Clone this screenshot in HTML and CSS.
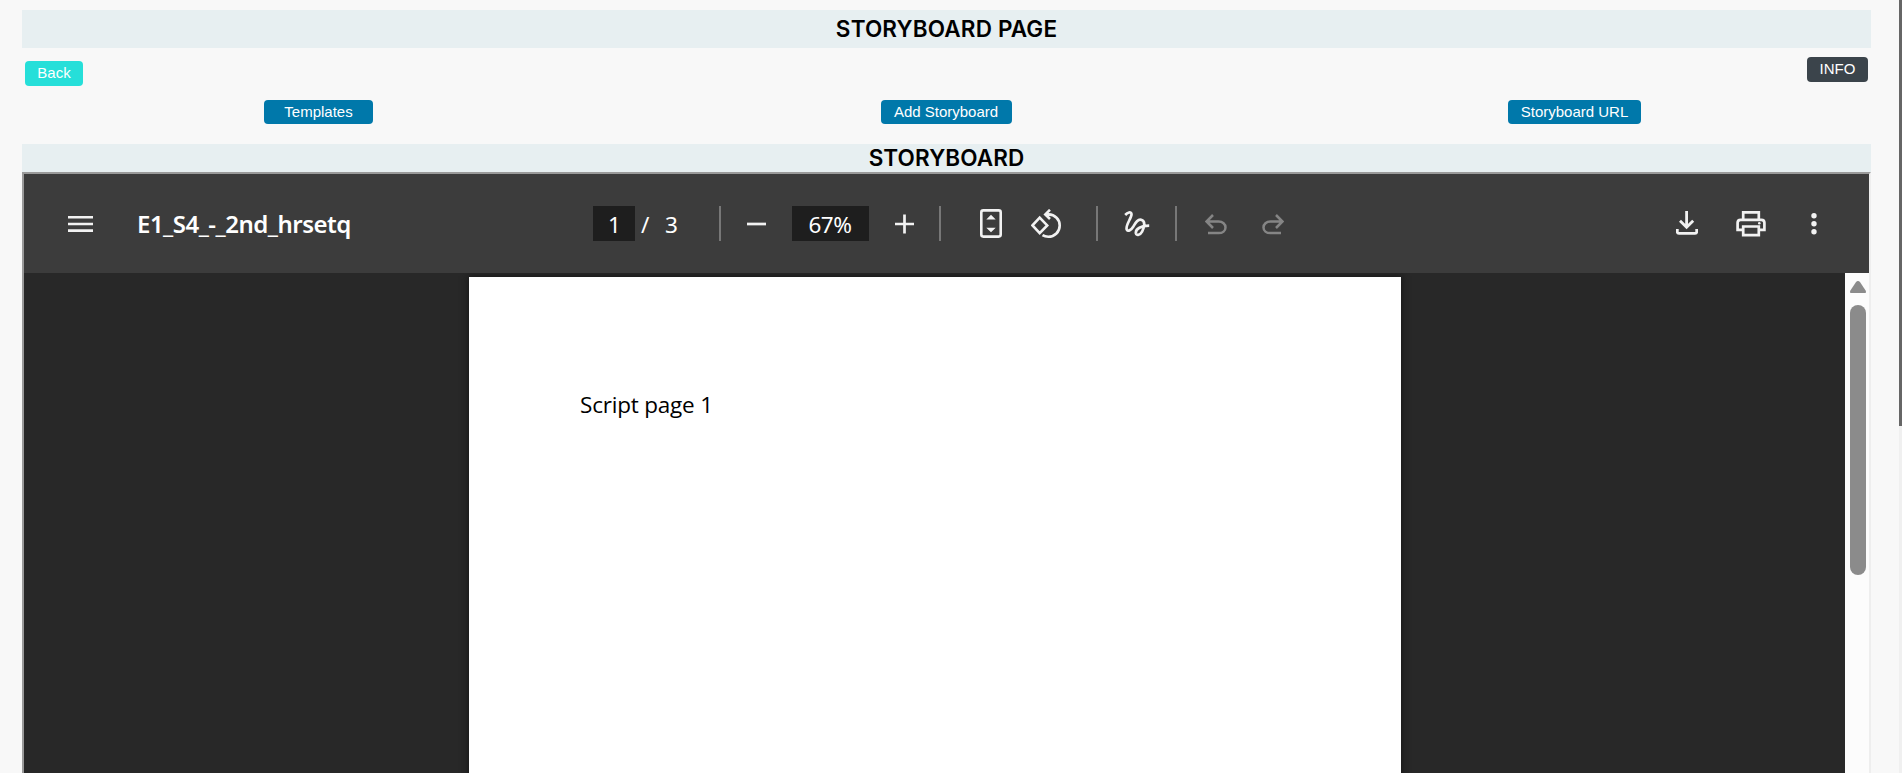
FILE: index.html
```html
<!DOCTYPE html>
<html lang="en">
<head>
<meta charset="utf-8">
<title>Storyboard Page</title>
<link rel="stylesheet" href="styles.css">
</head>
<body>
<main class="page">
  <h1 class="heading heading-main"><span class="main-text">STORYBOARD PAGE</span></h1>
  <div class="nav">
    <button class="btn back">Back</button>
    <button class="btn info">INFO</button>
  </div>
  <div class="actions">
    <div><button class="btn templates">Templates</button></div>
    <div><button class="btn add">Add Storyboard</button></div>
    <div><button class="btn url">Storyboard URL</button></div>
  </div>
  <h2 class="heading heading-sub"><span class="sub-text">STORYBOARD</span></h2>
  <section class="viewer">
    <header class="toolbar">
      <div class="tools-left">
        <svg class="icon" width="25" height="18" viewBox="0 0 25 18"><path d="M0 2.2h25M0 9h25M0 15.6h25" stroke-width="2.6"/></svg>
        <span class="doc-title">E1_S4_-_2nd_hrsetq</span>
      </div>
      <div class="tools-center">
        <span class="field page-no">1</span>
        <span class="slash">/</span>
        <span class="total">3</span>
        <i class="sep sep-a"></i>
        <svg class="icon minus" width="19" height="20" viewBox="0 0 19 20"><path d="M0 10h19" stroke-width="2.7"/></svg>
        <span class="field zoom">67%</span>
        <svg class="icon plus" width="19" height="20" viewBox="0 0 19 20"><path d="M0 10h19M9.5 .5v19" stroke-width="2.7"/></svg>
        <i class="sep sep-b"></i>
        <svg class="icon fit" width="22" height="29" viewBox="0 0 22 29"><rect x="1.3" y="1.4" width="19.4" height="26.2" rx="2" stroke-width="2.6"/><path class="solid" d="M6.3 10.5 11 5.8l4.7 4.7zM6.3 18.8H15.7L11 23.2z"/></svg>
        <svg class="icon rotate" width="31" height="30" viewBox="0 0 31 30"><path d="M8.7 8.7 16.2 16.4 8.7 24.1 1.5 16.4z" stroke-width="2.6"/><path d="M14.3 5.4h3.2c6.5.3 11.2 4.9 11.2 11 0 6.4-5 11.4-11.4 11.4-2.2 0-4.1-.5-5.8-1.6M19 .8l-4.7 4.6L19 10" stroke-width="2.6"/></svg>
        <i class="sep sep-c"></i>
        <svg class="icon draw" width="26" height="26" viewBox="0 0 26 26"><path d="M1.2 4C3.4 1.7 7.2.1 7.5 3.1 7.8 6.8 1 14.6 2.8 18.6c1.2 2.5 4.4.3 6.4-2.9 2.3-3.7 4.2-7.6 8-6.9 4.6 1 3.2 7.7.9 11.8-1.8 3.2-5.6 4.6-6.2 1.6-.7-4.8 5.6-7.4 13.3-7.5" stroke-width="2.7"/></svg>
        <i class="sep sep-d"></i>
        <svg class="icon undo" width="22" height="22" viewBox="0 0 22 22"><path d="M8 1 1.6 7.5 8 14M1.6 7.5h12c4 0 6.9 2.6 6.9 5.9s-2.9 5.7-6.9 5.7H3" stroke-width="2.5"/></svg>
        <svg class="icon redo" width="22" height="22" viewBox="0 0 22 22"><path d="M14 1l6.4 6.5L14 14M20.4 7.5h-12c-4 0-6.9 2.6-6.9 5.9s2.9 5.7 6.9 5.7H19" stroke-width="2.5"/></svg>
      </div>
      <div class="tools-right">
        <svg class="icon" width="22" height="25" viewBox="0 0 22 25"><path d="M10.6 0v16M4 9.7l6.6 6.5 6.6-6.5M1.3 18v2.8q0 1.6 1.6 1.6h16.2q1.6 0 1.6-1.6V18" stroke-width="2.8"/></svg>
        <svg class="icon print" width="30" height="26" viewBox="0 0 30 26"><path d="M7.2 8V1.3h15.6V8M7.2 18.8H1.6v-7q0-3 3-3h20.8q3 0 3 3v7h-5.6M7.2 15.5h15.6v8.7H7.2z" stroke-width="2.7"/><circle class="solid" cx="23.3" cy="12.3" r="1.3"/></svg>
        <svg class="icon dots" width="6" height="22" viewBox="0 0 6 22"><circle class="solid" cx="3" cy="2.8" r="2.7"/><circle class="solid" cx="3" cy="10.8" r="2.7"/><circle class="solid" cx="3" cy="18.8" r="2.7"/></svg>
      </div>
    </header>
    <div class="document">
      <div class="canvas"><article class="sheet"><p class="script">Script page 1</p></article></div>
      <div class="scroll">
        <svg width="24" height="24" viewBox="0 0 24 24"><path fill="#8b8b8b" d="M10.7 9.4q2.3-2.8 4.6 0l5.3 8q1.4 2.6-1.4 2.6H6.8q-2.8 0-1.4-2.6z"/></svg>
        <div class="thumb"></div>
      </div>
    </div>
  </section>
</main>
<aside class="page-scroll"><div class="page-thumb"></div></aside>
</body>
</html>
```
FILE: styles.css
```css
* { box-sizing: border-box; }
body { margin: 0; height: 773px; overflow: hidden; display: flex; background: #f8f8f8; font-family: "Liberation Sans", Arial, sans-serif; }
.page { width: 1849px; height: 773px; margin-left: 22px; padding-top: 10px; display: flex; flex-direction: column; flex: none; }
.heading { margin: 0; display: flex; justify-content: center; align-items: center; background: #e7eff1; color: #000; font: 600 22.5px/28px Inter, sans-serif; white-space: nowrap; flex: none; }
.heading-main { height: 38px; }
.heading-sub { height: 28px; }
.main-text { letter-spacing: .15px; }
.sub-text { letter-spacing: .1px; }
.nav { height: 52px; padding: 9px 3px 0; display: flex; justify-content: space-between; flex: none; }
.btn { display: block; border: 0; border-radius: 4px; padding: 0 0 1px; height: 24px; color: #fff; background: #0078aa; font: 15px/22px "Liberation Sans", Arial, sans-serif; white-space: nowrap; text-align: center; }
.back { width: 58px; height: 25px; margin-top: 4px; background: #26dfd9; }
.info { width: 61px; height: 25px; padding-bottom: 2px; background: #3b444b; }
.actions { height: 44px; display: grid; grid-template-columns: 593px 663px 593px; justify-items: center; flex: none; }
.templates { width: 109px; }
.add { width: 131px; margin-right: 1px; }
.url { width: 133px; }
.viewer { height: 620px; border-style: solid; border-width: 2px 2px 0; border-color: #9a9a9a #eee #eee #9a9a9a; display: flex; flex-direction: column; flex: none; }
.toolbar { height: 99px; display: flex; align-items: center; background: #3c3c3c; color: #fff; font-family: "Open Sans", "Noto Sans", sans-serif; flex: none; }
.tools-left, .tools-center, .tools-right { display: flex; align-items: center; }
.tools-left { width: 569px; padding-left: 44px; }
.tools-center { width: 1083px; }
.icon { display: block; flex: none; fill: none; stroke: #f2f2f2; }
.solid { fill: #f2f2f2; stroke: none; }
.doc-title { margin-left: 44px; font: 600 24px/34px "Noto Sans", sans-serif; letter-spacing: -.5px; white-space: nowrap; }
.field { height: 35px; background: #1e1e1e; text-align: center; font: 22.5px/37px "Noto Sans", sans-serif; }
.page-no { width: 42px; padding-left: 1px; }
.zoom { width: 77px; margin-left: 26px; letter-spacing: -.4px; padding-right: 1px; }
.slash, .total { font: 22.5px/35px "Noto Sans", sans-serif; padding-top: 2px; }
.slash { width: 24px; margin-left: 6px; }
.total { width: 20px; }
.sep { width: 2px; height: 35px; background: #777; }
.sep-a { margin-left: 34px; }
.minus { margin-left: 26px; }
.plus { margin-left: 26px; }
.sep-b { margin-left: 25px; }
.fit { margin-left: 39px; }
.rotate { margin-left: 29px; }
.sep-c { margin-left: 34px; }
.draw { margin-left: 26px; }
.sep-d { margin-left: 25px; }
.undo { margin-left: 28px; stroke: #858585; margin-top: 2px; }
.redo { margin-left: 35px; stroke: #858585; margin-top: 2px; }
.print { margin-left: 38px; }
.dots { margin-left: 45px; }
.document { flex: 1; min-height: 0; display: flex; background: #282828; }
.canvas { flex: 1; padding: 4px 444px 0 445px; overflow: hidden; }
.sheet { height: 520px; padding: 112px 0 0 111px; background: #fff; box-shadow: 0 0 7px 1px #181818; }
.script { margin: 0; color: #000; font: 22.5px/32px "Open Sans", sans-serif; letter-spacing: -.2px; white-space: nowrap; }
.scroll { width: 24px; background: #fcfcfc; }
.scroll svg { display: block; }
.thumb { width: 16px; height: 270px; margin: 8px 0 0 5px; border-radius: 8px; background: #8b8b8b; }
.page-scroll { width: 3px; margin-left: auto; background: #f0f0f0; flex: none; }
.page-thumb { height: 426px; background: #666; }
```
